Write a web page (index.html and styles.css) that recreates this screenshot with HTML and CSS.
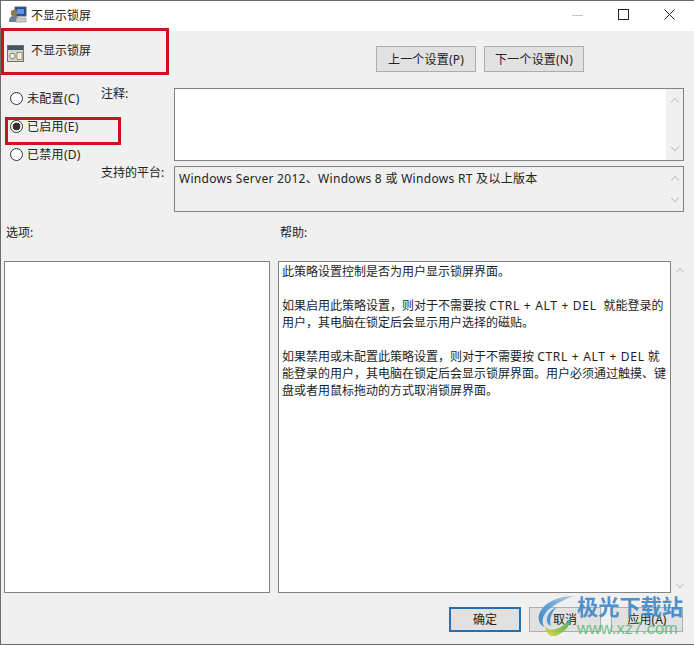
FILE: index.html
```html
<!DOCTYPE html>
<html lang="zh">
<head>
<meta charset="utf-8">
<title>不显示锁屏</title>
<link rel="stylesheet" href="styles.css">
</head>
<body>
<div class="window">
  <header class="titlebar">
    <svg class="app-icon" width="18" height="18" viewBox="0 0 18 18">
      <rect x="6" y="1" width="11" height="9" fill="#234b94" stroke="#59606b"/>
      <rect x="8" y="3" width="7" height="5" fill="#5d95dc"/>
      <circle cx="5" cy="7" r="3.2" fill="#8a7a55"/>
      <path d="M0 16c0-5 2-6 5-6s5 1 5 6z" fill="#6f7f96"/>
      <rect x="7" y="12" width="10" height="4" fill="#c9ccd1" stroke="#7d828a" stroke-width=".6"/>
    </svg>
    <span class="title-text">不显示锁屏</span>
    <div class="controls">
      <svg width="12" height="12" viewBox="0 0 12 12"><path d="M0 6.5h11" stroke="#c4c4c4"/></svg>
      <svg width="12" height="12" viewBox="0 0 12 12"><rect x=".5" y=".5" width="10" height="10" fill="none" stroke="#222"/></svg>
      <svg width="12" height="12" viewBox="0 0 12 12"><path d="M.5.5l10 10M10.5.5l-10 10" stroke="#222" fill="none"/></svg>
    </div>
  </header>

  <main class="content">
    <div class="head-row">
      <div class="policy-name">
        <svg width="17" height="17" viewBox="0 0 17 17">
          <rect x=".5" y=".5" width="16" height="16" fill="#d8d6c0" stroke="#6e7270"/>
          <rect x="1" y="1" width="15" height="4" fill="#42566b"/>
          <circle cx="5.5" cy="11" r="2.8" fill="#f7f7f2" stroke="#777"/>
          <rect x="10" y="7.5" width="5" height="7" fill="#f1efe0" stroke="#6f6f58" stroke-width=".7"/>
        </svg>
        <span>不显示锁屏</span>
      </div>
      <div class="nav-buttons">
        <button class="btn nav-btn">上一个设置(P)</button>
        <button class="btn nav-btn">下一个设置(N)</button>
      </div>
    </div>

    <div class="settings">
      <div class="radios">
        <label class="radio"><i class="dot"></i>未配置(C)</label>
        <label class="radio"><i class="dot on"></i>已启用(E)</label>
        <label class="radio"><i class="dot"></i>已禁用(D)</label>
      </div>
      <div class="fields">
        <span class="field-label">注释:</span>
        <div class="box note">
          <div class="scroll"><b class="up"></b><b class="down"></b></div>
        </div>
        <span class="field-label">支持的平台:</span>
        <div class="box platform">
          <p class="platform-text">Windows Server 2012、Windows 8 或 Windows RT 及以上版本</p>
          <div class="scroll"><b class="up"></b><b class="down"></b></div>
        </div>
      </div>
    </div>

    <div class="pane-labels">
      <span>选项:</span>
      <span>帮助:</span>
    </div>

    <div class="panes">
      <div class="pane options"></div>
      <div class="pane help">
        此策略设置控制是否为用户显示锁屏界面。<br><br>
        如果启用此策略设置，则对于不需要按 <span class="latin">CTRL + ALT + DEL&nbsp;</span> 就能登录的<br>
        用户，其电脑在锁定后会显示用户选择的磁贴。<br><br>
        如果禁用或未配置此策略设置，则对于不需要按 <span class="latin">CTRL + ALT + DEL</span> 就<br>
        能登录的用户，其电脑在锁定后会显示锁屏界面。用户必须通过触摸、键<br>
        盘或者用鼠标拖动的方式取消锁屏界面。
      </div>
      <div class="scroll pane-scroll"><b class="up"></b><b class="down"></b></div>
    </div>

    <div class="footer">
      <button class="btn primary">确定</button>
      <button class="btn">取消</button>
      <button class="btn">应用(A)</button>
    </div>
  </main>

  <div class="mark mark-policy"></div>
  <div class="mark mark-radio"></div>

  <div class="watermark">
    <svg class="wm-logo" width="42" height="44" viewBox="0 0 42 44">
      <defs>
        <linearGradient id="arc" x1="1" y1="0" x2="0" y2="1">
          <stop offset="0" stop-color="#b9c8d6"/>
          <stop offset=".55" stop-color="#4f9ad6"/>
          <stop offset="1" stop-color="#2f7fc4"/>
        </linearGradient>
        <linearGradient id="leaf" x1="1" y1="0" x2="0" y2="1">
          <stop offset="0" stop-color="#2fa866"/>
          <stop offset=".6" stop-color="#8ec63f"/>
          <stop offset="1" stop-color="#efcf3a"/>
        </linearGradient>
      </defs>
      <path d="M38 2C23 2 9 8 4 18 1 25 3 30 8 33 5 27 7 21 12 16 19 10 29 5 38 2z" fill="url(#arc)"/>
      <path d="M21 13C14 16 10 22 11 28c1 2 2 3 4 4-2-6 0-14 6-19z" fill="#3f8fd0"/>
      <path d="M9 33c6 5 16 3 26-9 0 9-11 19-20 18-3-1-5-5-6-9z" fill="url(#leaf)"/>
    </svg>
    <div class="wm-text">
      <span class="wm-cn">极光下载站</span>
      <span class="wm-url">www.xz7.com</span>
    </div>
  </div>
</div>
</body>
</html>
```

FILE: styles.css
```css
* { box-sizing: border-box; }
html, body { margin: 0; padding: 0; }
body {
  width: 694px;
  height: 645px;
  overflow: hidden;
  font: 12px/17px "Noto Sans", "Noto Sans CJK SC", sans-serif;
  color: #222;
  background: #f0f0f0;
}
.window {
  position: relative;
  width: 694px;
  height: 645px;
  display: flex;
  flex-direction: column;
  border: 1px solid #6b6b6b;
  border-right: 0;
  background: #f0f0f0;
}
.titlebar {
  height: 30px;
  flex: none;
  display: flex;
  align-items: center;
  padding: 0 18px 2px 8px;
  background: #fff;
}
.app-icon { margin-right: 4px; }
.controls { margin-left: auto; display: flex; gap: 34px; }
.content { flex: 1; display: flex; flex-direction: column; padding: 0 6px 0 3px; min-height: 0; }
.head-row { height: 54px; flex: none; display: flex; align-items: flex-start; }
.policy-name { display: flex; align-items: flex-start; gap: 7px; padding: 11px 0 0 3px; width: 372px; }
.policy-name svg { margin-top: 3px; }
.nav-buttons { display: flex; gap: 8px; padding-top: 15px; }
.btn {
  font: inherit;
  color: #222;
  height: 25px;
  width: 72px;
  padding: 0;
  background: #e1e1e1;
  border: 1px solid #adadad;
}
.nav-btn { width: 100px; height: 26px; letter-spacing: .2px; }
.primary { border: 2px solid #1f72b8; }
.settings { height: 127px; flex: none; display: flex; }
.radios { width: 97px; flex: none; display: flex; flex-direction: column; gap: 11px; padding: 5px 0 0 6px; }
.radio { display: flex; align-items: center; gap: 4px; height: 17px; letter-spacing: .3px; }
.dot {
  width: 13px;
  height: 13px;
  border: 1px solid #333;
  border-radius: 50%;
  background: #fff;
  display: block;
}
.dot.on { background: radial-gradient(circle, #333 0 3.6px, #fff 4.2px); }
.fields {
  flex: 1;
  display: grid;
  grid-template-columns: 73px 510px;
  grid-template-rows: 76px 48px;
  row-gap: 3px;
  align-content: start;
}
.box { border: 1px solid #828282; display: flex; justify-content: flex-end; }
.note { background: #fff; margin-top: 3px; }
.platform { background: #f0f0f0; justify-content: space-between; margin-top: 2px; }
.platform-text { margin: 3px 0 0 4px; letter-spacing: .3px; white-space: nowrap; }
.scroll {
  width: 17px;
  flex: none;
  background: #f0f0f0;
  display: flex;
  flex-direction: column;
  justify-content: space-between;
  align-items: center;
  padding: 7px 0;
}
.scroll b { width: 6px; height: 6px; border: solid #c4c4c4; border-width: 1.5px 0 0 1.5px; display: block; }
.scroll .up { transform: rotate(45deg); margin-top: 3px; }
.scroll .down { transform: rotate(225deg); margin-bottom: 3px; }
.pane-labels { height: 49px; flex: none; display: flex; padding: 12px 0 0 2px; }
.pane-labels span:first-child { width: 274px; }
.panes { height: 332px; flex: none; display: flex; }
.pane { border: 1px solid #828282; background: #fff; flex: none; }
.options { width: 266px; }
.help { width: 393px; margin-left: 8px; padding: 1px 0 0 3px; line-height: 17px; white-space: nowrap; color: #1d1d1d; }
.latin { letter-spacing: .7px; }
.pane-scroll { width: 17px; padding: 5px 0 3px; }
.footer { display: flex; justify-content: flex-end; gap: 8px; padding: 14px 5px 0 0; }
.footer .btn:last-child { margin-left: 2px; }
.mark { position: absolute; border: 3px solid #c9161d; }
.mark-policy { left: 0; top: 27px; width: 168px; height: 47px; }
.mark-radio { left: 4px; top: 116px; width: 116px; height: 28px; }
.watermark { position: absolute; left: 535px; top: 593px; display: flex; align-items: flex-start; pointer-events: none; opacity: .9; }
.wm-logo { margin-right: -1px; }
.wm-text { display: flex; flex-direction: column; }
.wm-cn { font: bold 21.2px/24px "Noto Sans CJK SC", sans-serif; color: #3f87c6; white-space: nowrap; }
.wm-url { font: 16.5px/17px "Liberation Sans", sans-serif; color: #63bd7c; margin-top: 2px; }
```
